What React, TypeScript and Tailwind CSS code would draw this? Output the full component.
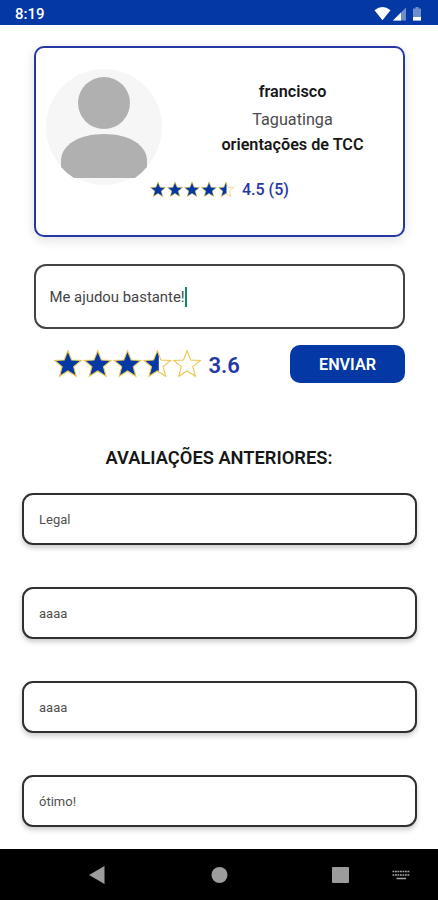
interface Review {
  id: number
  text: string
}

const reviews: Review[] = [
  { id: 1, text: 'Legal' },
  { id: 2, text: 'aaaa' },
  { id: 3, text: 'aaaa' },
  { id: 4, text: 'ótimo!' },
]

const STAR = 'M15 1.6 L18.7 11 L28.4 11.4 L20.8 17.7 L23.4 27.4 L15 22 L6.6 27.4 L9.2 17.7 L1.6 11.4 L11.3 11 Z'

interface StarsProps {
  id: string
  fills: number[]
  className: string
}

function Stars({ id, fills, className }: StarsProps) {
  return (
    <svg viewBox="0 0 150 30" className={className} fill="none">
      {fills.map((fill, i) => (
        <g key={i} transform={`translate(${i * 30} 0)`}>
          <clipPath id={`${id}-${i}`}>
            <rect x="0" y="0" width={30 * fill} height="30" />
          </clipPath>
          <path d={STAR} fill="#0338a5" clipPath={`url(#${id}-${i})`} />
          <path d={STAR} stroke="#ecc64e" strokeWidth="1.1" />
        </g>
      ))}
    </svg>
  )
}

function StatusBar() {
  return (
    <header className="flex h-[25px] shrink-0 items-center justify-between bg-[#0338a5] pl-[15px] pr-[14px] pt-1">
      <span className="text-[15px] font-medium leading-none text-white">8:19</span>
      <svg width="50" height="16" viewBox="0 0 50 16" className="-mt-0.5">
        <path d="M0.5 4.2 Q8.5 -2 16.5 4.2 L8.5 14.2 Z" fill="#fff" />
        <path d="M32 1.5 V14.5 H19 Z" fill="#6d8dce" />
        <path d="M27 6.5 V14.5 H19 Z" fill="#fff" />
        <path d="M41.5 1 h3 v1.5 h2.5 V14.5 H39 V2.5 h2.5 Z" fill="#6d8dce" />
        <path d="M39 11 h8 v3.5 h-8 Z" fill="#fff" />
      </svg>
    </header>
  )
}

function Avatar() {
  return (
    <svg width="116" height="116" viewBox="0 0 116 116" className="shrink-0">
      <circle cx="58" cy="58" r="58" fill="#f6f6f6" />
      <circle cx="58" cy="34" r="26" fill="#b0b0b0" />
      <path d="M15 92 C15 76 33 65 58 65 C83 65 101 76 101 92 V98 Q96 104 89 109 H28 Q21 105 15 98 Z" fill="#b0b0b0" />
    </svg>
  )
}

function ProfileCard() {
  return (
    <section className="h-[191px] rounded-[10px] border-2 border-[#2637a3] bg-white pl-2.5 pt-[21px] shadow-[0_3px_12px_rgba(0,0,0,0.13)]">
      <div className="flex h-[116px]">
        <Avatar />
        <div className="ml-[26px] w-[209px] pt-[12px] text-center text-[16.2px] text-[#171717]">
          <p className="leading-[22px] font-semibold">francisco</p>
          <p className="mt-[6px] leading-[22px] text-[#4c4c4c]">Taguatinga</p>
          <p className="mt-[3px] leading-[22px] font-semibold">orientações de TCC</p>
        </div>
      </div>
      <div className="-mt-[5px] ml-[103px] flex items-center">
        <Stars id="profile" fills={[1, 1, 1, 1, 0.53]} className="-mt-0.5 h-[17px] w-[86px]" />
        <span className="ml-[7px] text-[16px] leading-[20px] font-medium text-[#2438a4]">4.5 (5)</span>
      </div>
    </section>
  )
}

function ReviewForm() {
  return (
    <section className="mt-[27px]">
      <div className="flex h-[65px] items-center rounded-[12px] border-2 border-[#444] bg-white pl-[13.5px]">
        <span className="pt-0.5 text-[14.9px] text-[#444]">Me ajudou bastante!</span>
        <span className="h-5 w-0.5 bg-[#0c8a6c]" />
      </div>
      <div className="mt-4 flex h-[38px] items-center justify-between pl-[18.5px]">
        <div className="flex items-center">
          <Stars id="rating" fills={[1, 1, 1, 0.55, 0]} className="h-[30px] w-[149px]" />
          <span className="ml-[7px] pt-0.5 text-[22px] font-semibold text-[#2438a4]">3.6</span>
        </div>
        <button className="h-[38px] w-[115px] rounded-[10px] bg-[#0338a5] pt-[3px] text-[16.2px] font-semibold text-white">
          ENVIAR
        </button>
      </div>
    </section>
  )
}

function NavigationBar() {
  return (
    <nav className="h-[51px] shrink-0 bg-black">
      <svg width="438" height="51" viewBox="0 0 438 51" fill="#9c9c9c">
        <path d="M89 26 L104.5 17 V35 Z" />
        <circle cx="219.5" cy="26" r="8" />
        <rect x="332" y="18" width="17" height="16" rx="1" />
        <g stroke="#a6a6a6" strokeWidth="1.5">
          <path d="M392.5 22.5 H410 M392.5 26 H410" strokeDasharray="1.8 0.7" />
          <path d="M396.5 29.5 H406" />
        </g>
      </svg>
    </nav>
  )
}

export default function App() {
  return (
    <div className="flex h-[900px] w-[438px] flex-col overflow-hidden bg-white font-[Roboto,sans-serif]">
      <StatusBar />
      <main className="min-h-0 flex-1">
        <div className="ml-[34px] mt-[21px] w-[371px]">
          <ProfileCard />
          <ReviewForm />
        </div>
        <h1 className="mt-[63px] text-center text-[18.3px] leading-6 font-semibold text-[#171717]">AVALIAÇÕES ANTERIORES:</h1>
        <div className="ml-[22px] mt-[23px] flex w-[395px] flex-col gap-[42px]">
          {reviews.map(review => (
            <div
              key={review.id}
              className="flex h-[52px] items-center rounded-[11px] border-2 border-[#303030] bg-white pl-[15px] pt-0.5 text-[13px] text-[#505050] shadow-[0_3px_5px_rgba(0,0,0,0.2)]"
            >
              {review.text}
            </div>
          ))}
        </div>
      </main>
      <NavigationBar />
    </div>
  )
}
